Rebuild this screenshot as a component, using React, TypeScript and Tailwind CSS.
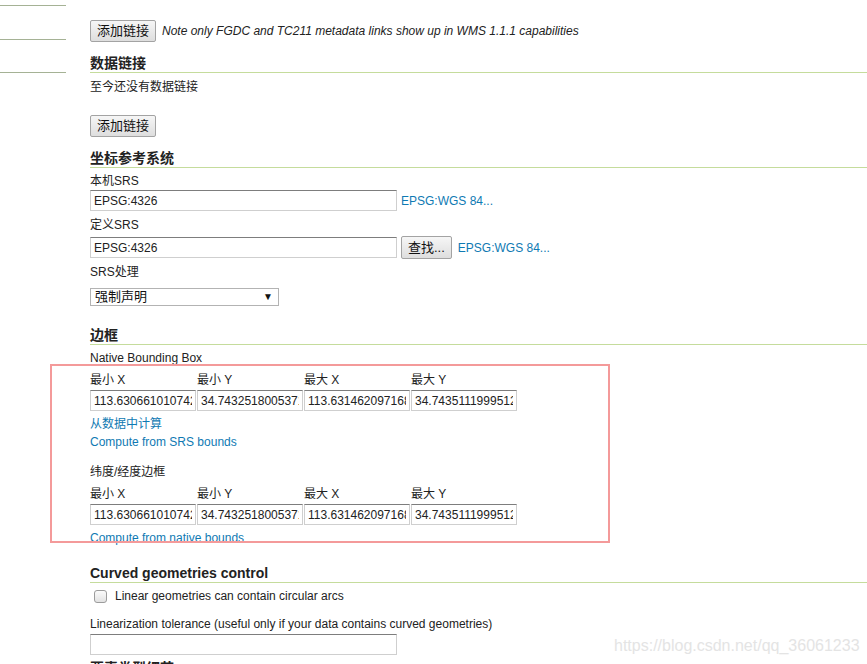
import React from 'react'

const LINK = 'text-[12px] leading-[14px] text-[#0f7ab3]'
const LABEL = 'text-[12px] leading-[14px] text-[#222]'
const HEADING =
  'border-b border-[#c5dc9c] text-[14px] leading-[18px] font-bold text-[#222]'
const INPUT =
  'h-[21px] border border-[#cfcfcf] border-t-[#7d7d7d] bg-white px-[3px] text-[12px] text-[#222] outline-none'
const BUTTON =
  'h-[22px] rounded-[2px] border border-[#a3a3a3] bg-gradient-to-b from-[#f6f6f6] to-[#dedede] px-[6px] text-[13px] leading-[20px] text-[#111]'

function BBox({ values }: { values: string[] }) {
  const labels = ['最小 X', '最小 Y', '最大 X', '最大 Y']
  return (
    <>
      <div className="mt-[8px] grid w-[428px] grid-cols-4">
        {labels.map((l) => (
          <span key={l} className={LABEL}>
            {l}
          </span>
        ))}
      </div>
      <div className="mt-[3px] flex gap-[1px]">
        {values.map((v, i) => (
          <input key={i} readOnly value={v} className={`${INPUT} w-[106px]`} />
        ))}
      </div>
    </>
  )
}

export default function App() {
  const coords = [
    '113.630661010742',
    '34.7432518005371',
    '113.631462097168',
    '34.7435111999512',
  ]
  return (
    <div className="relative h-[664px] w-[867px] overflow-hidden bg-white font-['Liberation_Sans','Noto_Sans_CJK_SC',sans-serif]">
      <div className="flex">
        {/* left nav remnants */}
        <div className="flex w-[66px] flex-col">
          <div className="h-[6px] border-b border-[#a5b295]" />
          <div className="h-[34px] border-b border-[#a5b295]" />
          <div className="h-[33px] border-b border-[#a5b295]" />
        </div>

        <div className="ml-[24px] flex flex-1 flex-col pt-[20px]">
          <div className="flex items-center gap-[6px]">
            <button type="button" className={BUTTON}>
              添加链接
            </button>
            <span className="text-[12px] italic text-[#222]">
              Note only FGDC and TC211 metadata links show up in WMS 1.1.1
              capabilities
            </span>
          </div>

          <div className={`${HEADING} mt-[12px]`}>数据链接</div>
          <div className={`${LABEL} mt-[7px]`}>至今还没有数据链接</div>
          <div className="mt-[19px]">
            <button type="button" className={BUTTON}>
              添加链接
            </button>
          </div>

          <div className={`${HEADING} mt-[12px]`}>坐标参考系统</div>
          <div className={`${LABEL} mt-[6px]`}>本机SRS</div>
          <div className="mt-[2px] flex items-center gap-[4px]">
            <input readOnly value="EPSG:4326" className={`${INPUT} w-[307px]`} />
            <span className={LINK}>EPSG:WGS 84...</span>
          </div>
          <div className={`${LABEL} mt-[7px]`}>定义SRS</div>
          <div className="mt-[4px] flex items-center">
            <input readOnly value="EPSG:4326" className={`${INPUT} w-[307px]`} />
            <button
              type="button"
              className="ml-[4px] h-[23px] rounded-[2px] border border-[#a3a3a3] bg-gradient-to-b from-[#f6f6f6] to-[#dedede] px-[6px] text-[13px] leading-[20px] text-[#111]"
            >
              查找...
            </button>
            <span className={`${LINK} ml-[6px]`}>EPSG:WGS 84...</span>
          </div>
          <div className={`${LABEL} mt-[6px]`}>SRS处理</div>
          <div className="mt-[9px] flex h-[18px] w-[189px] items-center justify-between border border-[#b3b3b3] bg-white pl-[4px] pr-[5px]">
            <span className="text-[13px] leading-[16px] text-[#111]">强制声明</span>
            <span className="text-[10px] leading-[10px] text-[#111]">▼</span>
          </div>

          <div className={`${HEADING} mt-[20px]`}>边框</div>
          <div className={`${LABEL} mt-[6px]`}>Native Bounding Box</div>
          <BBox values={coords} />
          <div className={`${LINK} mt-[6px]`}>从数据中计算</div>
          <div className={`${LINK} mt-[4px]`}>Compute from SRS bounds</div>
          <div className={`${LABEL} mt-[16px]`}>纬度/经度边框</div>
          <BBox values={coords} />
          <div className={`${LINK} mt-[6px]`}>Compute from native bounds</div>

          <div className={`${HEADING} mt-[19px]`}>Curved geometries control</div>
          <div className="mt-[6px] flex items-center gap-[8px] pl-[4px]">
            <span className="h-[13px] w-[13px] rounded-[3px] border border-[#9c9c9c] bg-gradient-to-b from-[#fbfbfb] to-[#e2e2e2]" />
            <span className={LABEL}>Linear geometries can contain circular arcs</span>
          </div>
          <div className={`${LABEL} mt-[14px]`}>
            Linearization tolerance (useful only if your data contains curved
            geometries)
          </div>
          <input readOnly value="" className={`${INPUT} mt-[3px] w-[307px]`} />
          <div className={`${HEADING} mt-[4px]`}>要素类型细节</div>
        </div>
      </div>

      {/* red annotation box */}
      <div className="pointer-events-none absolute left-[50px] top-[364px] h-[179px] w-[560px] border-2 border-[#f49a9a]" />

      {/* watermark */}
      <div className="pointer-events-none absolute left-[614px] top-[634px] text-[16px] text-[#e4e4e4]">
        https://blog.csdn.net/qq_36061233
      </div>
    </div>
  )
}
